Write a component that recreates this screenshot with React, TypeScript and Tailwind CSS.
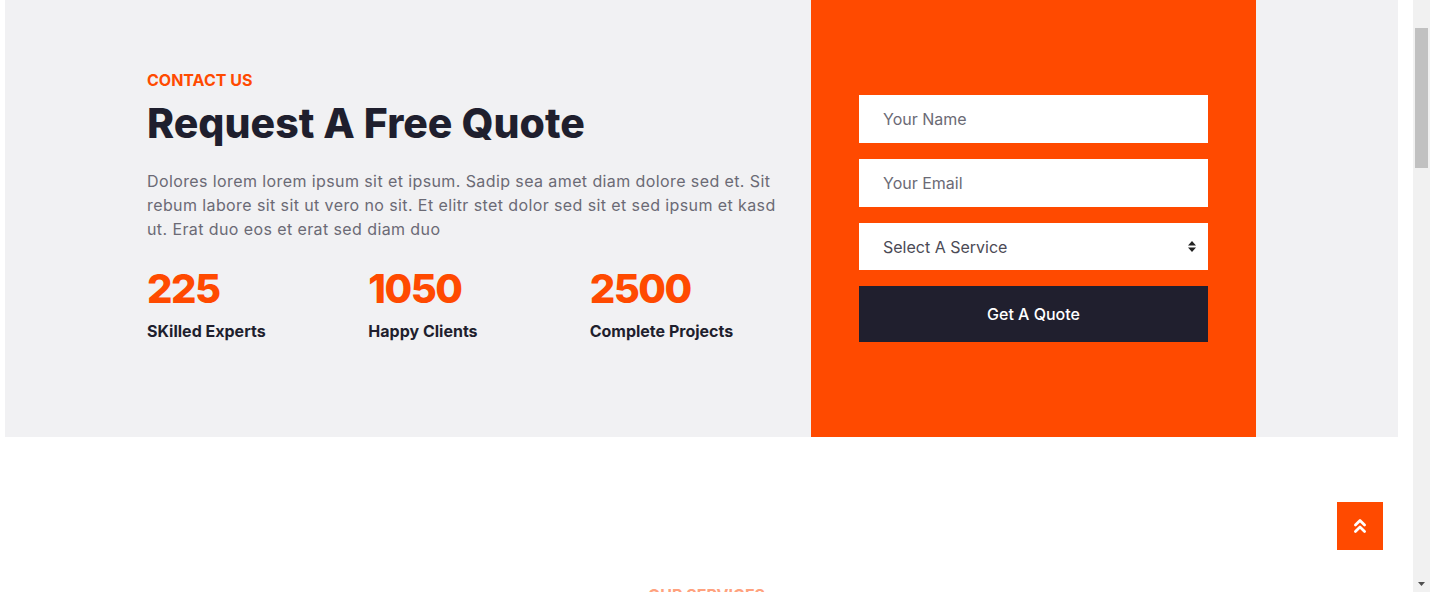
import { ChevronsUp } from 'lucide-react';

const stats = [
  { value: '225', label: 'SKilled Experts' },
  { value: '1050', label: 'Happy Clients' },
  { value: '2500', label: 'Complete Projects' },
];

const font = { fontFamily: 'Inter, "Open Sans", sans-serif' };

export default function App() {
  return (
    <div className="flex h-[592px] w-[1430px] overflow-hidden bg-white" style={font}>
      <main className="flex w-[1413px] flex-col">
        <section className="ml-[5px] flex h-[437px] w-[1393px] shrink-0 bg-[#f1f1f3]">
          <div className="w-[806px] pl-[142px] pr-[30px] pt-[70px]">
            <h5 className="text-[16px] font-bold uppercase leading-[20px] text-[#ff4a00]">Contact Us</h5>
            <h1 className="mt-[7px] text-[41px] font-extrabold leading-[52px] text-[#1f1f2e]">
              Request A Free Quote
            </h1>
            <p className="mt-[20px] w-[640px] text-[16px] leading-[24px] tracking-[0.4px] text-[#6b6a75]">
              Dolores lorem lorem ipsum sit et ipsum. Sadip sea amet diam dolore sed et. Sit rebum labore sit sit ut
              vero no sit. Et elitr stet dolor sed sit et sed ipsum et kasd ut. Erat duo eos et erat sed diam duo
            </p>
            <div className="mt-[24px] grid w-[664px] grid-cols-3">
              {stats.map((s) => (
                <div key={s.label}>
                  <div className="text-[40px] font-extrabold leading-[48px] tracking-[-1.5px] text-[#ff4a00]">
                    {s.value}
                  </div>
                  <div className="mt-[6px] text-[16px] font-bold leading-[24px] text-[#1f1f2e]">{s.label}</div>
                </div>
              ))}
            </div>
          </div>
          <div className="flex w-[445px] flex-col gap-[16px] bg-[#ff4a00] px-[48px] pt-[95px]">
            <div className="flex h-[48px] items-center bg-white px-[24px] text-[16px] text-[#6b6a75]">Your Name</div>
            <div className="flex h-[48px] items-center bg-white px-[24px] text-[16px] text-[#6b6a75]">Your Email</div>
            <div className="flex h-[47px] items-center justify-between bg-white pl-[24px] pr-[12px] text-[16px] text-[#4b4a55]">
              <span>Select A Service</span>
              <svg width="8" height="11" viewBox="0 0 8 11" className="fill-[#222]">
                <path d="M4 0 L8 4.5 H0 Z M0 6.5 H8 L4 11 Z" />
              </svg>
            </div>
            <button type="button" className="h-[56px] bg-[#201f2e] text-[16px] font-medium text-white">
              Get A Quote
            </button>
          </div>
        </section>
        <div className="relative flex-1">
          <button
            type="button"
            className="absolute left-[1337px] top-[65px] flex h-[48px] w-[46px] items-center justify-center bg-[#ff4a00] text-white"
          >
            <ChevronsUp size={22} strokeWidth={3} />
          </button>
          <div className="pt-[148px] text-center text-[16px] font-bold uppercase leading-[20px] text-[#ffa27e]">
            Our Services
          </div>
        </div>
      </main>
      <div className="flex w-[17px] flex-col bg-[#f1f1f1]">
        <div className="h-[28px]" />
        <div className="mx-[2px] h-[140px] bg-[#c1c1c1]" />
        <div className="flex-1" />
        <div className="flex h-[17px] items-center justify-center">
          <svg width="7" height="4" viewBox="0 0 7 4" className="fill-[#505050]">
            <path d="M0 0 H7 L3.5 4 Z" />
          </svg>
        </div>
      </div>
    </div>
  );
}
